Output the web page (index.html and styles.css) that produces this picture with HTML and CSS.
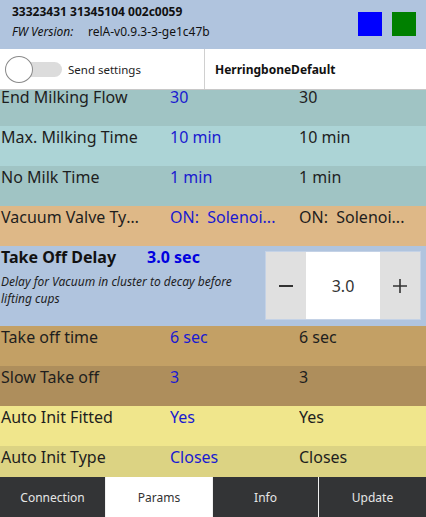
FILE: index.html
```html
<!DOCTYPE html>
<html>
<head>
<meta charset="utf-8">
<link rel="stylesheet" href="styles.css">
</head>
<body>
<div class="app">
  <header class="header">
    <div class="ids">
      <div class="serial">33323431 31345104 002c0059</div>
      <div class="fw"><span class="fw-label">FW Version:</span><span class="fw-value">relA-v0.9.3-3-ge1c47b</span></div>
    </div>
    <div class="leds">
      <span class="led led-blue"></span>
      <span class="led led-green"></span>
    </div>
  </header>
  <div class="settings">
    <div class="settings-left">
      <span class="toggle"><span class="track"></span><span class="knob"></span></span>
      <span class="send">Send settings</span>
    </div>
    <div class="settings-right">HerringboneDefault</div>
  </div>
  <div class="list">
    <div class="rows">
      <div class="row c-teal"><div class="lbl">End Milking Flow</div><div class="v1">30</div><div class="v2">30</div></div>
      <div class="row c-light"><div class="lbl">Max. Milking Time</div><div class="v1">10 min</div><div class="v2">10 min</div></div>
      <div class="row c-teal"><div class="lbl">No Milk Time</div><div class="v1">1 min</div><div class="v2">1 min</div></div>
      <div class="row c-burly"><div class="lbl">Vacuum Valve Type</div><div class="v1">ON:  Solenoi...</div><div class="v2">ON:  Solenoi...</div></div>
      <div class="edit">
        <div class="edit-info">
          <div class="edit-title"><span class="edit-name">Take Off Delay</span><span class="edit-val">3.0 sec</span></div>
          <div class="edit-desc">Delay for Vacuum in cluster to decay before lifting cups</div>
        </div>
        <div class="stepper">
          <div class="step-btn">
            <svg width="16" height="16" viewBox="0 0 16 16"><path d="M1 8h14" stroke="#333" stroke-width="2"/></svg>
          </div>
          <div class="step-val">3.0</div>
          <div class="step-btn">
            <svg width="16" height="16" viewBox="0 0 16 16"><path d="M1 8h14M8 1v14" stroke="#333" stroke-width="1.6"/></svg>
          </div>
        </div>
      </div>
      <div class="row c-tan"><div class="lbl">Take off time</div><div class="v1">6 sec</div><div class="v2">6 sec</div></div>
      <div class="row c-brown"><div class="lbl">Slow Take off</div><div class="v1">3</div><div class="v2">3</div></div>
      <div class="row c-khaki"><div class="lbl">Auto Init Fitted</div><div class="v1">Yes</div><div class="v2">Yes</div></div>
      <div class="row c-khaki2"><div class="lbl">Auto Init Type</div><div class="v1">Closes</div><div class="v2">Closes</div></div>
    </div>
  </div>
  <nav class="tabs">
    <div class="tab">Connection</div>
    <div class="tab active">Params</div>
    <div class="tab">Info</div>
    <div class="tab">Update</div>
  </nav>
</div>
</body>
</html>
```
FILE: styles.css
```css
* { box-sizing: border-box; }
html, body { margin: 0; padding: 0; }
body {
  font-family: "Noto Sans", "Open Sans", sans-serif;
  color: #1e1e1e;
  width: 426px;
  height: 517px;
  overflow: hidden;
}
.app {
  display: flex;
  flex-direction: column;
  height: 517px;
}
.header {
  height: 49px;
  background: #b0c4de;
  display: flex;
  justify-content: space-between;
  align-items: flex-start;
  padding: 0 10px 0 12px;
}
.ids { padding-top: 3px; }
.serial {
  font-size: 12px;
  font-weight: 700;
  line-height: 17px;
  color: #111;
}
.fw {
  font-size: 12px;
  line-height: 17px;
  margin-top: 3px;
  color: #111;
}
.fw-label { font-style: italic; display: inline-block; width: 76px; }
.leds { display: flex; gap: 10px; padding-top: 12px; }
.led { width: 24px; height: 24px; display: block; }
.led-blue { background: #0000ff; }
.led-green { background: #008000; }

.settings {
  height: 41px;
  display: flex;
  background: #fff;
  border-bottom: 1px solid #c8c8c8;
  position: relative;
  z-index: 2;
}
.settings-left {
  width: 205px;
  border-right: 1px solid #d0d0d0;
  display: flex;
  align-items: center;
  padding-left: 5px;
  gap: 6px;
}
.toggle {
  position: relative;
  width: 57px;
  height: 27px;
  display: block;
}
.track {
  position: absolute;
  left: 14px;
  top: 6px;
  width: 43px;
  height: 15px;
  border-radius: 8px;
  background: #dcdcdc;
}
.knob {
  position: absolute;
  left: 0;
  top: 0;
  width: 28px;
  height: 27px;
  border-radius: 50%;
  background: #fff;
  border: 1px solid #8a8a8a;
}
.send { font-size: 11.5px; color: #222; }
.settings-right {
  flex: 1;
  display: flex;
  align-items: center;
  padding-left: 10px;
  font-size: 12px;
  font-weight: 700;
  color: #111;
}

.list {
  flex: 1;
  overflow: hidden;
  position: relative;
}
.rows { margin-top: -4px; }
.row {
  height: 40px;
  display: grid;
  grid-template-columns: 170px 129px 1fr;
  font-size: 16px;
  line-height: 22px;
}
.row > div {
  white-space: pre;
  overflow: hidden;
  text-overflow: ellipsis;
}
.lbl { padding-left: 1px; padding-right: 30px; color: #1e1e1e; }
.v1 { color: #1a1ad0; padding-right: 10px; }
.v2 { color: #1e1e1e; padding-right: 10px; }
.c-teal { background: #a0c4c4; }
.c-light { background: #acd4d6; }
.c-burly { background: #deb887; }
.c-tan { background: #c3a065; }
.c-brown { background: #ae8e5c; }
.c-khaki { background: #f0e68c; }
.c-khaki2 { background: #dcd383; }

.edit {
  height: 80px;
  background: #b0c4de;
  display: flex;
  padding: 5px 5px 6px 1px;
}
.edit-info { flex: 1; margin-top: -5px; }
.edit-title {
  font-size: 16px;
  font-weight: 700;
  line-height: 23px;
  color: #111;
}
.edit-val { color: #0000e0; margin-left: 31px; }
.edit-desc {
  font-size: 12px;
  font-style: italic;
  line-height: 17px;
  margin-top: 4px;
  color: #1e1e1e;
  padding-right: 4px;
}
.stepper {
  width: 156px;
  display: flex;
  border: 1px solid #c4d2e6;
}
.step-btn {
  width: 40px;
  background: #e0e0e0;
  display: flex;
  align-items: center;
  justify-content: center;
}
.step-val {
  flex: 1;
  background: #fff;
  display: flex;
  align-items: center;
  justify-content: center;
  font-size: 16px;
  color: #333;
}

.tabs {
  height: 40px;
  display: grid;
  grid-template-columns: 106px 107px 106px 107px;
  background: #333436;
}
.tab {
  display: flex;
  align-items: center;
  justify-content: center;
  font-size: 12px;
  color: #e6e6e6;
  border-right: 1px solid #f0f0f0;
}
.tab:last-child { border-right: none; }
.tab.active { background: #fff; color: #333; }
```
